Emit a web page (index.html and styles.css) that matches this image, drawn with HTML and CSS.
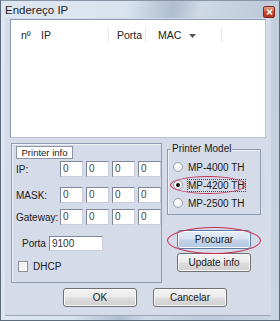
FILE: index.html
```html
<!DOCTYPE html>
<html lang="pt">

<head>
    <meta charset="UTF-8">
    <title>Endereço IP</title>
    <link rel="stylesheet" href="styles.css">
</head>

<body>
    <div class="window">
        <div class="titlebar">
            <span class="title">Endereço IP</span>
            <span class="close-btn">
                <svg width="7" height="6" viewBox="0 0 7 6"><path d="M1 0.5 L6 5.5 M6 0.5 L1 5.5" stroke="#fff" stroke-width="1.6"/></svg>
            </span>
        </div>
        <div class="client">
            <div class="list">
                <div class="list-head">
                    <span class="col col-n">nº</span>
                    <span class="col col-ip">IP</span>
                    <span class="col col-porta">Porta</span>
                    <span class="col col-mac">MAC <svg width="7" height="4" viewBox="0 0 7 4"><path d="M0 0 H7 L3.5 4 Z" fill="#555"/></svg></span>
                </div>
            </div>

            <div class="panels">
                <div class="group info">
                    <div class="info-tab">Printer info</div>
                    <div class="field-row row-ip">
                        <span class="field-label">IP:</span>
                        <div class="octets">
                            <span class="edit">0</span><span class="edit">0</span><span class="edit">0</span><span class="edit">0</span>
                        </div>
                    </div>
                    <div class="field-row row-mask">
                        <span class="field-label">MASK:</span>
                        <div class="octets">
                            <span class="edit">0</span><span class="edit">0</span><span class="edit">0</span><span class="edit">0</span>
                        </div>
                    </div>
                    <div class="field-row row-gw">
                        <span class="field-label">Gateway:</span>
                        <div class="octets">
                            <span class="edit">0</span><span class="edit">0</span><span class="edit">0</span><span class="edit">0</span>
                        </div>
                    </div>
                    <div class="porta-row">
                        <span class="field-label">Porta</span>
                        <span class="edit porta">9100</span>
                    </div>
                    <div class="check-row">
                        <span class="checkbox"></span>
                        <span>DHCP</span>
                    </div>
                </div>

                <div class="side">
                    <div class="group model">
                        <span class="legend">Printer Model</span>
                        <div class="radio-row"><span class="radio"></span>MP-4000 TH</div>
                        <div class="radio-row"><span class="radio checked"></span><span class="focus">MP-4200 TH</span></div>
                        <div class="radio-row"><span class="radio"></span>MP-2500 TH</div>
                    </div>
                    <button class="btn btn-search">Procurar</button>
                    <button class="btn btn-update">Update info</button>
                </div>
            </div>

            <div class="actions">
                <button class="btn">OK</button>
                <button class="btn">Cancelar</button>
            </div>
        </div>

        <!-- marcações em vermelho -->
        <span class="mark mark-model"></span>
        <span class="mark mark-search"></span>
    </div>
</body>

</html>
```

FILE: styles.css
```css
* {
    padding: 0;
    margin: 0;
    box-sizing: border-box;
}

body {
    font-family: "Liberation Sans", Arial, sans-serif;
    font-size: 10px;
    color: #1a1a1a;
    background: #fff;
}

.window {
    position: relative;
    width: 280px;
    height: 321px;
    background: linear-gradient(100deg, #dfe7f1 0%, #d9e3ef 38%, #aebdd0 52%, #cfd9e6 60%, #bfcbdb 78%, #cbd6e4 100%);
    border: 1px solid #5d6b7e;
    border-top-color: #8895a6;
    display: flex;
    flex-direction: column;
}

.titlebar {
    height: 17px;
    display: flex;
    align-items: center;
    justify-content: space-between;
    padding: 0 4px 0 4px;
}

.title {
    font-size: 11.5px;
    color: #1e1e1e;
    margin-top: 1px;
}

.close-btn {
    width: 12px;
    height: 12px;
    margin-top: 4px;
    border: 1px solid #7a2b20;
    border-radius: 2px;
    background: linear-gradient(#e8a08a, #c9452c 55%, #b9361f);
    display: flex;
    align-items: center;
    justify-content: center;
}

.client {
    margin: 0 8px 4px 4px;
    flex: 1;
    background: #d5dbe8;
    padding: 0 5px 0 5px;
    border-bottom: 1px solid #9aa6b8;
}

.list {
    margin-top: 1px;
    height: 119px;
    background: #fff;
    border: 1px solid #8b9ab2;
    border-right-color: #b7c2d4;
    border-bottom-color: #b7c2d4;
}

.list-head {
    display: flex;
    height: 14px;
    margin-top: 8px;
    line-height: 14px;
    color: #222;
    font-size: 10.5px;
}

.col {
    position: relative;
    height: 14px;
}

.col-n {
    width: 20px;
    padding-left: 10px;
    box-sizing: content-box;
}

.col-ip {
    width: 67px;
}

.col-porta {
    width: 37px;
    padding-left: 8px;
    border-left: 1px solid #e2e5ea;
}

.col-mac {
    width: 77px;
    padding-left: 12px;
    border-left: 1px solid #e2e5ea;
    border-right: 1px solid #e2e5ea;
}

.col-mac svg {
    margin-left: 5px;
    vertical-align: 1px;
}

.panels {
    display: flex;
    margin-top: 4px;
}

.group {
    border: 1px solid #8e9bb0;
    box-shadow: inset 1px 1px 0 #eef1f6;
}

.info {
    width: 151px;
    height: 140px;
    margin-left: 1px;
    margin-top: 1px;
    padding: 2px 0 0 4px;
}

.info-tab {
    width: 57px;
    height: 13px;
    line-height: 12px;
    text-align: center;
    font-size: 9.5px;
    background: #fff;
    border: 1px solid #8d96a4;
}

.field-row {
    display: flex;
    align-items: center;
}

.field-label {
    width: 44px;
}

.row-ip {
    margin-top: 2px;
}

.row-mask {
    margin-top: 10px;
}

.row-gw {
    margin-top: 6px;
}

.octets {
    display: flex;
    gap: 3px;
}

.edit {
    display: block;
    width: 23px;
    height: 16px;
    line-height: 14px;
    padding-left: 2px;
    background: #fff;
    border: 1px solid #7d8799;
    border-right-color: #c9ced8;
    border-bottom-color: #c9ced8;
    color: #444;
}

.porta-row {
    display: flex;
    align-items: center;
    margin-top: 11px;
    padding-left: 6px;
}

.porta-row .field-label {
    width: 27px;
}

.edit.porta {
    width: 54px;
    height: 15px;
    color: #333;
}

.check-row {
    display: flex;
    align-items: center;
    margin-top: 10px;
    padding-left: 2px;
}

.checkbox {
    width: 10px;
    height: 11px;
    margin-right: 5px;
    background: linear-gradient(135deg, #e9ebee, #ffffff);
    border: 1px solid #8b8f96;
}

.side {
    display: flex;
    flex-direction: column;
    margin-left: 5px;
}

.model {
    position: relative;
    width: 94px;
    height: 66px;
    margin-top: 7px;
    padding: 8px 0 0 5px;
}

.legend {
    position: absolute;
    top: -7px;
    left: 3px;
    padding: 0 1px;
    background: #d5dbe8;
    line-height: 12px;
}

.radio-row {
    display: flex;
    align-items: center;
    height: 18px;
    gap: 5px;
    font-size: 10px;
}

.radio {
    width: 10px;
    height: 10px;
    border-radius: 50%;
    border: 1px solid #9ba2ad;
    background: radial-gradient(circle at 35% 35%, #ffffff, #e4e6ea);
    display: flex;
    align-items: center;
    justify-content: center;
}

.radio.checked::after {
    content: "";
    width: 4px;
    height: 4px;
    border-radius: 50%;
    background: #111;
}

.focus {
    outline: 1px dotted #444;
    outline-offset: 0;
}

.btn {
    font-family: "Liberation Sans", Arial, sans-serif;
    font-size: 10px;
    color: #1a1a1a;
    width: 74px;
    height: 19px;
    border: 1px solid #707070;
    border-radius: 3px;
    background: linear-gradient(#f3f3f3 0%, #ebebeb 48%, #dddddd 52%, #cfcfcf 100%);
    box-shadow: inset 0 0 0 1px #fbfbfb;
}

.btn-search {
    margin: 15px 0 0 10px;
    border-color: #5a7ea3;
    background: linear-gradient(#e6eef8 0%, #d6e2f0 48%, #c3d3e8 52%, #b4c8e0 100%);
}

.btn-update {
    margin: 4px 0 0 10px;
}

.actions {
    display: flex;
    gap: 16px;
    margin: 5px 0 0 53px;
}

.mark {
    position: absolute;
    border: 1px solid #c8304e;
    border-radius: 50%;
}

.mark-model {
    left: 169px;
    top: 175px;
    width: 76px;
    height: 18px;
}

.mark-search {
    left: 166px;
    top: 226px;
    width: 94px;
    height: 27px;
}
```
